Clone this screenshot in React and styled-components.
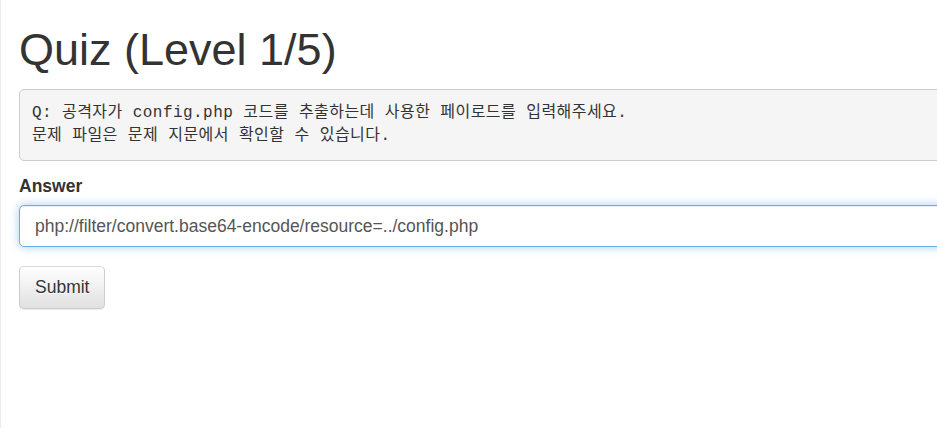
import { useEffect, useRef } from 'react';
import styled, { createGlobalStyle } from 'styled-components';

const GlobalStyle = createGlobalStyle`
  html, body {
    margin: 0;
    padding: 0;
    background: #fff;
    overflow: hidden;
  }

  body {
    font-family: "Liberation Sans", Arial, sans-serif;
    font-size: 17.5px;
    line-height: 1.42857;
    color: #333;
  }
`;

const Page = styled.div`
  display: flow-root;
  width: 1200px;
  height: 100vh;
  box-sizing: border-box;
  border-left: 1px solid #ececec;
  padding: 0 18px;
`;

const Title = styled.h1`
  margin: 25px 0 14.5px;
  font-size: 45px;
  font-weight: 500;
  line-height: 1.1;
  color: #333;
`;

const Question = styled.pre`
  margin: 0 0 12.5px;
  padding: 11.875px;
  background: #f5f5f5;
  border: 1px solid #ccc;
  border-radius: 5px;
  font-family: "Liberation Mono", "Noto Sans CJK KR", monospace;
  font-size: 16px;
  letter-spacing: 0.45px;
  line-height: 23.2px;
  color: #333;
  white-space: pre-wrap;
`;

const Form = styled.form`
  display: flex;
  flex-direction: column;
  align-items: flex-start;
`;

const Group = styled.div`
  width: 100%;
  margin-bottom: 18.75px;
`;

const Label = styled.label`
  display: block;
  margin-bottom: 6.25px;
  font-weight: 700;
`;

const Input = styled.input`
  display: block;
  width: 100%;
  height: 42.5px;
  box-sizing: border-box;
  padding: 7.5px 15px;
  font-family: inherit;
  font-size: 17.5px;
  color: #555;
  caret-color: #333;
  background: #fff;
  border: 1px solid #66afe9;
  border-radius: 5px;
  outline: 0;
  box-shadow: inset 0 1px 1px rgba(0, 0, 0, 0.075), 0 0 10px rgba(102, 175, 233, 0.6);
`;

const Button = styled.button`
  height: 42.5px;
  padding: 7.5px 15px;
  font-family: inherit;
  font-size: 17.5px;
  line-height: 1.42857;
  color: #333;
  text-shadow: 0 1px 0 #fff;
  background-image: linear-gradient(to bottom, #fff 0, #e0e0e0 100%);
  border: 1px solid #ccc;
  border-top-color: #dbdbdb;
  border-radius: 5px;
  box-shadow: inset 0 1px 0 rgba(255, 255, 255, 0.15), 0 1px 1px rgba(0, 0, 0, 0.075);
  cursor: pointer;
`;

const answer = 'php://filter/convert.base64-encode/resource=../config.php';

export default function App() {
  const inputRef = useRef(null);

  useEffect(() => {
    const el = inputRef.current;
    if (el) {
      el.focus({ preventScroll: true });
      el.setSelectionRange(answer.length, answer.length);
      window.scrollTo(0, 0);
    }
  }, []);

  return (
    <>
      <GlobalStyle />
      <Page>
        <Title>Quiz (Level 1/5)</Title>
        <Question>
          {'Q: 공격자가 config.php 코드를 추출하는데 사용한 페이로드를 입력해주세요.\n문제 파일은 문제 지문에서 확인할 수 있습니다.'}
        </Question>
        <Form onSubmit={e => e.preventDefault()}>
          <Group>
            <Label htmlFor="answer">Answer</Label>
            <Input id="answer" ref={inputRef} type="text" defaultValue={answer} />
          </Group>
          <Button type="submit">Submit</Button>
        </Form>
      </Page>
    </>
  );
}
